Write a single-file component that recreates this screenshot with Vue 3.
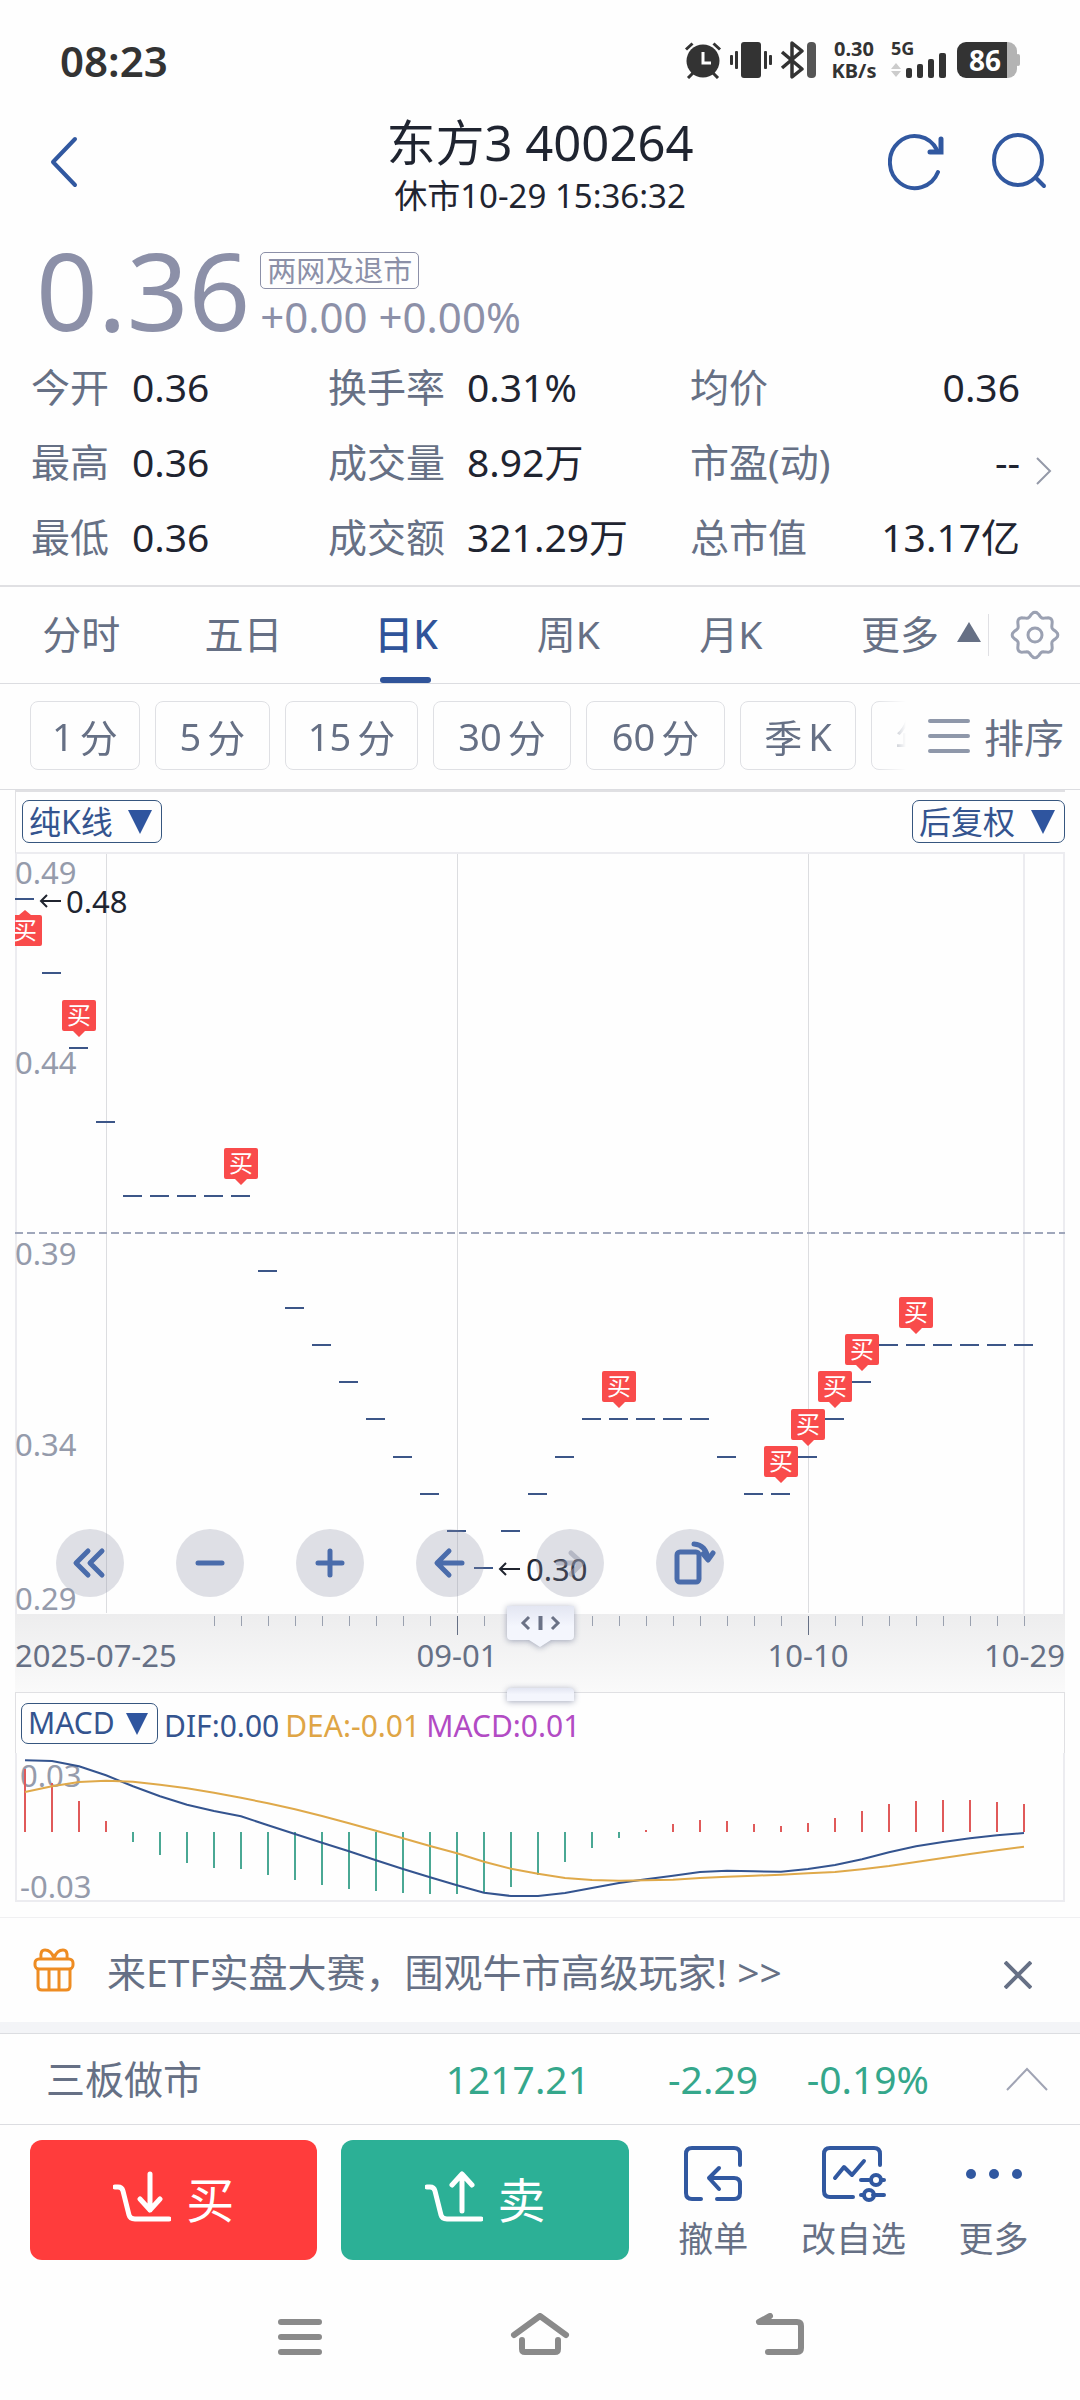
<script setup>
const stats = [
  ['今开', '0.36', '换手率', '0.31%', '均价', '0.36'],
  ['最高', '0.36', '成交量', '8.92万', '市盈(动)', '--'],
  ['最低', '0.36', '成交额', '321.29万', '总市值', '13.17亿'],
]
const tabs = ['分时', '五日', '日K', '周K', '月K']
const periods = [['1', '分'], ['5', '分'], ['15', '分'], ['30', '分'], ['60', '分'], ['季', 'K'], ['年', 'K']]

// Daily closing prices in cents, oldest first
const prices = [
  48, 46, 44, 42, 40, 40, 40, 40, 40, 38, 37, 36, 35, 34, 33, 32, 31, 30, 31, 32,
  33, 34, 34, 34, 34, 34, 33, 32, 32, 33, 34, 35, 36, 36, 36, 36, 36, 36,
]
const px = (i) => 10 + 27 * i
const py = (p) => Math.round(45 + (48 - p) * 37.17)
const candles = prices.map((p, i) => ({ x: px(i), y: py(p) }))
const buys = [2, 8, 22, 28, 29, 30, 31, 33].map((i) => candles[i])
const levels = [
  ['0.49', 30], ['0.44', 220], ['0.39', 411], ['0.34', 602], ['0.29', 756],
]
const ticks = Array.from({ length: 31 }, (_, k) => ({ x: px(k + 7), major: k + 7 === 16 || k + 7 === 29 }))

const hist = [
  63, 49, 31, 11, -10, -23, -31, -36, -37, -43, -48, -53, -57, -59, -61, -62, -62, -61, -55, -43,
  -30, -16, -6, 2, 8, 12, 11, 8, 6, 9, 14, 21, 28, 31, 32, 32, 30, 28,
]
const dif = [
  241, 243, 259, 286, 319, 349, 374, 393, 409, 436, 462, 488, 514, 541, 567, 592, 616, 638, 648, 648,
  639, 624, 609, 598, 587, 576, 572, 574, 575, 567, 555, 538, 517, 499, 486, 475, 466, 459,
]
const dea = [
  336, 319, 306, 302, 305, 314, 325, 338, 353, 370, 388, 408, 430, 452, 475, 498, 520, 545, 566, 581,
  594, 600, 602, 601, 599, 594, 590, 587, 584, 580, 576, 568, 558, 546, 534, 522, 511, 500,
]
const line = (s) => s.map((v, i) => `${px(i)},${(v / 3 - 73).toFixed(1)}`).join(' ')

const gear = Array.from({ length: 96 }, (_, k) => {
  const t = (k / 96) * Math.PI * 2
  const r = 20.6 + 2.2 * Math.cos(8 * t)
  return `${(25 + r * Math.cos(t)).toFixed(1)},${(25 + r * Math.sin(t)).toFixed(1)}`
}).join(' ')
</script>

<template>
  <div class="page">
    <div class="status">
      <span class="clock">08:23</span>
      <svg class="i-alarm" width="38" height="38" viewBox="0 0 38 38" fill="none" stroke="#333" stroke-width="3">
        <circle cx="19" cy="20" r="16.5" fill="#333" stroke="none" />
        <path d="M2 8.500 8.500 2.500M36 8.500 29.500 2.500M9 32l-5 5M29 32l5 5" />
        <path d="M19 11v11h8" stroke="#fff" />
      </svg>
      <svg class="i-vib" width="42" height="38" viewBox="0 0 42 38" fill="#333">
        <rect x="11" y="1" width="20" height="36" rx="3" />
        <rect x="5" y="10" width="3" height="18" rx="1" /><rect x="0" y="14" width="3" height="10" rx="1" />
        <rect x="34" y="10" width="3" height="18" rx="1" /><rect x="39" y="14" width="3" height="10" rx="1" />
      </svg>
      <svg class="i-bt" width="36" height="38" viewBox="0 0 36 38">
        <path d="M2 11l20 17-10 8V2l10 8L2 27" fill="none" stroke="#333" stroke-width="3.500" stroke-linejoin="round" />
        <rect x="27" y="1" width="9" height="36" rx="4" fill="#555" />
      </svg>
      <span class="speed"><b>0.30</b><b>KB/s</b></span>
      <span class="signal">
        <b>5G</b>
        <svg width="56" height="26" viewBox="0 0 56 26">
          <path d="M5 11l5 6H0zM5 25l5-6H0z" fill="#ccc" />
          <g fill="#333">
            <rect x="15" y="16" width="6" height="10" rx="2" /><rect x="26" y="12" width="6" height="14" rx="2" />
            <rect x="37" y="7" width="6" height="19" rx="2" /><rect x="48" y="1" width="7" height="25" rx="2" />
          </g>
        </svg>
      </span>
      <span class="battery"><b>86</b></span>
    </div>

    <header class="head">
      <button class="icon-btn back" aria-label="返回">
        <svg width="28" height="54" viewBox="0 0 28 54" fill="none" stroke="#3158a0" stroke-width="4" stroke-linecap="round" stroke-linejoin="round"><path d="M25 4 3 27l22 23" /></svg>
      </button>
      <div class="title">
        <h1>东方3 400264</h1>
        <p>休市10-29 15:36:32</p>
      </div>
      <div class="tools">
        <button class="icon-btn" aria-label="刷新">
          <svg width="56" height="58" viewBox="0 0 56 58" fill="none" stroke="#3158a0" stroke-width="4" stroke-linecap="round"><path d="M49 17A25 26 0 1 0 50 39" /><path d="M53 6v13H42" stroke-width="5" /></svg>
        </button>
        <button class="icon-btn" aria-label="搜索">
          <svg width="58" height="58" viewBox="0 0 58 58" fill="none" stroke="#3158a0" stroke-width="4" stroke-linecap="round"><ellipse cx="28" cy="27" rx="24" ry="25" /><path d="M46 45l8 8" /></svg>
        </button>
      </div>
    </header>

    <section class="price">
      <strong>0.36</strong>
      <div>
        <span class="tag">两网及退市</span>
        <span class="change">+0.00 +0.00%</span>
      </div>
    </section>

    <section class="stats">
      <dl>
        <template v-for="row in stats" :key="row[0]">
          <dt>{{ row[0] }}</dt><dd>{{ row[1] }}</dd>
          <dt>{{ row[2] }}</dt><dd>{{ row[3] }}</dd>
          <dt>{{ row[4] }}</dt><dd class="end">{{ row[5] }}</dd>
        </template>
      </dl>
      <svg width="18" height="30" viewBox="0 0 18 30" fill="none" stroke="#9499a8" stroke-width="2"><path d="M2 2l13 13L2 28" /></svg>
    </section>

    <nav class="tabs">
      <button v-for="t in tabs" :key="t" :class="{ on: t === '日K' }">{{ t }}</button>
      <button class="more">更多<svg width="24" height="20" viewBox="0 0 24 20"><path d="M12 0l12 20H0z" fill="#667085" /></svg></button>
      <button class="gear" aria-label="设置">
        <svg width="50" height="50" viewBox="0 0 50 50" fill="none" stroke="#9ba1b2" stroke-width="3"><polygon :points="gear" /><circle cx="25" cy="25" r="7" /></svg>
      </button>
    </nav>

    <div class="periods">
      <div class="chips">
        <button v-for="p in periods" :key="p[0]"><span>{{ p[0] }}</span><span>{{ p[1] }}</span></button>
      </div>
      <button class="sort">
        <svg width="42" height="36" viewBox="0 0 42 36" stroke="#8f98aa" stroke-width="4" stroke-linecap="round"><path d="M2 3h38M2 18h38M2 33h38" /></svg>
        排序
      </button>
    </div>

    <main class="panel">
      <div class="panel-head">
        <label class="picker">
          <select aria-label="主图指标"><option>纯K线</option></select>
          <svg width="24" height="24" viewBox="0 0 24 24"><path d="M0 0h24L12 24z" fill="#2f559f" /></svg>
        </label>
        <label class="picker">
          <select aria-label="复权方式"><option>后复权</option></select>
          <svg width="24" height="24" viewBox="0 0 24 24"><path d="M0 0h24L12 24z" fill="#2f559f" /></svg>
        </label>
      </div>

      <div class="chart">
        <svg class="plot" viewBox="0 0 1050 838">
          <defs>
            <linearGradient id="band" x1="0" y1="0" x2="0" y2="1"><stop offset="0" stop-color="#ededee" /><stop offset="1" stop-color="#fafafa" /></linearGradient>
            <linearGradient id="knob" x1="0" y1="0" x2="0" y2="1"><stop offset="0" stop-color="#e3e6f2" /><stop offset=".5" stop-color="#f4f6fd" /></linearGradient>
            <clipPath id="frame"><rect width="1050" height="760" /></clipPath>
          </defs>
          <rect y="760" width="1050" height="78" fill="url(#band)" />
          <path d="M1 0v760M1049 0v760M1009 0v760" stroke="#ececf0" stroke-width="2" />
          <path d="M91.500 0v759M442.500 0v759M793.500 0v759" stroke="#dcdde0" />
          <path d="M0 379h1050" stroke="#a0a7bb" stroke-width="2" stroke-dasharray="8 4" />
          <text v-for="l in levels" :key="l[0]" class="lvl" x="0" :y="l[1]">{{ l[0] }}</text>
          <path v-for="(c, i) in candles" :key="i" :d="`M${Math.max(c.x - 10, 0)} ${c.y}H${c.x + 9}`" stroke="#3c5688" stroke-width="2" />
          <g fill="none" stroke="#20242f" stroke-width="2"><path d="M46 47H26M32 41l-6 6 6 6M505 715h-20M491 709l-6 6 6 6" /></g>
          <text class="ext" x="51" y="59">0.48</text>
          <text class="ext" x="511" y="727">0.30</text>
          <g clip-path="url(#frame)">
            <path d="M0 61h4l6-5 6 5h9q2 0 2 2v27q0 2-2 2H0z" fill="#f94b4b" />
            <text class="buy" x="10" y="85">买</text>
          </g>
          <g v-for="b in buys" :key="b.x">
            <path :d="`M${b.x - 15} ${b.y - 48}h30q2 0 2 2v27q0 2-2 2h-9l-6 6-6-6h-9q-2 0-2-2v-27q0-2 2-2z`" fill="#f94b4b" />
            <text class="buy" :x="b.x" :y="b.y - 24">买</text>
          </g>
          <path v-for="t in ticks" :key="t.x" :d="`M${t.x + 0.5} 762v${t.major ? 19 : 10}`" :stroke="t.major ? '#667085' : '#9aa1af'" />
          <text class="date" x="0" y="813">2025-07-25</text>
          <text class="date" x="442" y="813" text-anchor="middle">09-01</text>
          <text class="date" x="793" y="813" text-anchor="middle">10-10</text>
          <text class="date" x="1050" y="813" text-anchor="end">10-29</text>
          <g class="knob">
            <path d="M492 752h67v30q0 4-4 4h-19l-11 7-11-7h-18q-4 0-4-4z" fill="url(#knob)" />
            <path d="M514 763l-6 6 6 6M537 763l6 6-6 6" fill="none" stroke="#6b7286" stroke-width="3" />
            <path d="M525.500 762v14" stroke="#6b7286" stroke-width="4" />
            <path d="M492 847v-9q0-4 4-4h59q4 0 4 4v9z" fill="url(#knob)" />
          </g>
        </svg>
        <div class="controls">
          <button aria-label="快退"><svg viewBox="0 0 68 68"><path d="M32 22 20 34l12 12M46 22 34 34l12 12" /></svg></button>
          <button aria-label="缩小"><svg viewBox="0 0 68 68"><path d="M22 34h24" /></svg></button>
          <button aria-label="放大"><svg viewBox="0 0 68 68"><path d="M22 34h24M34 22v24" /></svg></button>
          <button aria-label="左移"><svg viewBox="0 0 68 68"><path d="M46 34H22M33 22 21 34l12 12" /></svg></button>
          <button aria-label="右移" disabled><svg viewBox="0 0 68 68"><path d="M22 34h24M35 24l11 10-11 11" /></svg></button>
          <button aria-label="横屏"><svg viewBox="0 0 68 68"><rect x="21" y="23" width="22" height="30" rx="3" /><path d="M38 15q12 1 14 15M47 25l5 6 5-7" /></svg></button>
        </div>
      </div>

      <div class="macd-head">
        <label class="picker small">
          <select aria-label="副图指标"><option>MACD</option></select>
          <svg width="22" height="22" viewBox="0 0 24 24"><path d="M0 0h24L12 24z" fill="#2f559f" /></svg>
        </label>
        <span class="dif">DIF:0.00</span>
        <span class="dea">DEA:-0.01</span>
        <span class="macd">MACD:0.01</span>
      </div>
      <svg class="plot macd-plot" viewBox="0 0 1050 149">
        <path d="M1 0v148H1049V0" fill="none" stroke="#ececf0" stroke-width="2" />
        <text class="lvl" x="5" y="34">0.03</text>
        <text class="lvl" x="5" y="145">-0.03</text>
        <path v-for="(h, i) in hist" :key="i" :d="`M${px(i)} 79v${-h}`" :stroke="h > 0 ? '#e05a5a' : '#4aa894'" stroke-width="2" />
        <polyline :points="line(dif)" fill="none" stroke="#34548f" stroke-width="2" />
        <polyline :points="line(dea)" fill="none" stroke="#dfa94a" stroke-width="2" />
      </svg>
    </main>

    <aside class="banner">
      <svg width="42" height="44" viewBox="0 0 42 44" fill="none" stroke="#ee8c22" stroke-width="3"><rect x="2" y="11" width="38" height="10" rx="4" /><path d="M5 21v17q0 4 4 4h24q4 0 4-4V21M16 21v21M26 21v21M21 10Q18 2 12 2 7 2 8 10M21 10q3-8 9-8 5 0 4 8" /></svg>
      <a href="#">来ETF实盘大赛，围观牛市高级玩家! &gt;&gt;</a>
      <button class="icon-btn close" aria-label="关闭"><svg width="28" height="28" viewBox="0 0 28 28" stroke="#667085" stroke-width="4"><path d="M1 1l26 26M27 1 1 27" /></svg></button>
    </aside>

    <section class="index">
      <span class="name">三板做市</span>
      <span class="i1">1217.21</span>
      <span class="i2">-2.29</span>
      <span class="i3">-0.19%</span>
      <button class="icon-btn" aria-label="展开"><svg width="44" height="24" viewBox="0 0 44 24" fill="none" stroke="#a0a4b4" stroke-width="2"><path d="M2 23 22 2l20 21" /></svg></button>
    </section>

    <footer class="actions">
      <button class="trade buy-btn">
        <svg width="58" height="52" viewBox="0 0 58 52"><path d="M2 16h3q4 0 5 4l6 24q1 4 6 4h34M37 3v36M27 28l10 11 10-11" /></svg>买
      </button>
      <button class="trade sell-btn">
        <svg width="58" height="52" viewBox="0 0 58 52"><path d="M2 16h3q4 0 5 4l6 24q1 4 6 4h34M37 40V4M27 14 37 3l10 11" /></svg>卖
      </button>
      <button class="act">
        <svg width="64" height="60" viewBox="0 0 64 60"><path d="M59 21V10q0-6-6-6H11q-6 0-6 6v39q0 6 6 6h9M28 34h25q6 0 6 6v9q0 6-6 6H36M38 24 28 34l10 11" /></svg>
        撤单
      </button>
      <button class="act wide">
        <svg width="66" height="60" viewBox="0 0 66 60"><path d="M60 21V10q0-6-6-6H10q-6 0-6 6v37q0 6 6 6h23M15 34l9-11 8 8 12-14M41 36h8M62 36h2M41 51h2M53 51h11" /><circle cx="56" cy="36" r="5" /><circle cx="49" cy="51" r="5" /></svg>
        改自选
      </button>
      <button class="act">
        <svg width="60" height="60" viewBox="0 0 60 60"><g fill="#3158a0" stroke="none"><circle cx="7" cy="30" r="5" /><circle cx="30" cy="30" r="5" /><circle cx="53" cy="30" r="5" /></g></svg>
        更多
      </button>
    </footer>

    <nav class="sysnav">
      <button class="icon-btn" aria-label="最近任务"><svg width="60" height="48" viewBox="0 0 60 48"><path d="M11 9h38M11 24h38M11 39h38" /></svg></button>
      <button class="icon-btn" aria-label="主页"><svg width="60" height="48" viewBox="0 0 60 48"><path d="M4 22 30 3l26 19M12 27v9q0 3 3 3h30q3 0 3-3v-9" /></svg></button>
      <button class="icon-btn" aria-label="返回上一级"><svg width="60" height="48" viewBox="0 0 60 48"><path d="M20 3 9 9h38q4 0 4 4v22q0 4-4 4H18" /></svg></button>
    </nav>
  </div>
</template>

<style>
body { background: #fefefe; }
</style>

<style scoped>
.page {
  font-family: "Noto Sans", "Noto Sans CJK SC", sans-serif;
  font-size: 39px;
  color: #667085;
  background: #fefefe;
  overflow: hidden;
}
.page * { box-sizing: border-box; }
button, select { font: inherit; color: inherit; background: none; border: 0; padding: 0; margin: 0; }
svg { display: block; flex: none; }
.icon-btn { display: flex; }

.status { display: flex; align-items: center; height: 112px; padding: 8px 60px 0 60px; color: #333; }
.clock { font-size: 42px; font-weight: 600; margin-right: auto; }
.i-vib { margin-left: 8px; }
.i-bt { margin-left: 8px; }
.speed { display: flex; flex-direction: column; align-items: center; width: 48px; margin: 0 13px 0 14px; font-size: 20px; line-height: 22px; }
.signal { display: flex; flex-direction: column; width: 56px; height: 36px; }
.signal b { font-size: 18px; line-height: 12px; height: 10px; }
.battery {
  position: relative; width: 60px; height: 36px; margin: 0 3px 0 10px; border-radius: 9px;
  background: linear-gradient(90deg, #333 50px, #b3b3b3 50px);
  color: #fff; font-size: 28px; line-height: 36px; padding-left: 12px;
}
.battery::after { content: ""; position: absolute; right: -3px; top: 12px; width: 4px; height: 12px; background: #b3b3b3; border-radius: 2px; }

.head { display: grid; grid-template-columns: 1fr auto 1fr; align-items: start; padding: 2px 32px 0; color: #1f2430; }
.head .icon-btn { height: 96px; align-items: center; }
.head .back { padding-left: 18px; }
.title { text-align: center; }
.title h1 { margin: 0; font-size: 49px; line-height: 56px; font-weight: 400; }
.title p { margin: 0; font-size: 33px; line-height: 52px; }
.tools { display: flex; justify-content: flex-end; gap: 46px; }

.price { display: flex; gap: 10px; padding: 8px 32px 0 36px; height: 128px; color: #8c90a8; }
.price strong { font-size: 108px; line-height: 120px; font-weight: 400; }
.price div { display: flex; flex-direction: column; align-items: flex-start; padding-top: 22px; }
.tag { border: 1px solid; border-radius: 5px; font-size: 29px; line-height: 35px; padding: 0 6px; }
.change { font-size: 42px; line-height: 56px; }

.stats { display: flex; align-items: center; padding: 0 27px 11px 31px; border-bottom: 2px solid #e0e0e3; }
.stats dl { flex: 1; display: grid; grid-template-columns: 101fr 196fr 139fr 223fr 164fr 166fr; margin: 0 15px 0 0; line-height: 74px; row-gap: 1px; white-space: nowrap; }
.stats dd { margin: 0; color: #1f2430; }
.stats .end { text-align: right; }
.stats svg { margin-top: 18px; }

.tabs { display: flex; align-items: center; height: 97px; border-bottom: 1px solid #dcdde1; padding-right: 20px; }
.tabs button { position: relative; flex: 1; height: 96px; padding-bottom: 7px; white-space: nowrap; }
.tabs .on { color: #30549a; font-weight: 500; }
.tabs .on::after { content: ""; position: absolute; left: calc(50% - 26px); bottom: 0; width: 51px; height: 6px; border-radius: 3px; background: #30549a; }
.tabs .more { display: flex; flex: none; align-items: center; justify-content: flex-end; gap: 18px; width: 176px; padding-right: 7px; }
.tabs .gear { display: flex; flex: none; align-items: center; justify-content: flex-end; width: 72px; height: 42px; padding: 0; border-left: 1px solid #e0e0e4; }

.periods { display: flex; align-items: center; padding: 17px 16px 19px 30px; border-bottom: 1px solid #dcdde1; }
.chips {
  flex: 1; min-width: 0; display: grid; overflow: hidden; gap: 15px;
  grid-template-columns: 110px 115px 133px 138px 139px 116px 116px;
  -webkit-mask-image: linear-gradient(90deg, #000 calc(100% - 30px), transparent);
  mask-image: linear-gradient(90deg, #000 calc(100% - 30px), transparent);
}
.chips button { display: flex; justify-content: center; align-items: center; gap: 6px; height: 69px; border: 1px solid #dfe0e4; border-radius: 8px; font-size: 38px; }
.sort { display: flex; align-items: center; gap: 14px; margin-left: 22px; font-size: 40px; white-space: nowrap; }

.panel { margin: 0 15px; }
.panel-head { display: flex; justify-content: space-between; align-items: center; height: 64px; padding: 0 0 2px 6px; border: 1px solid #e0e0e3; border-right-width: 0; border-top-width: 2px; border-bottom: 2px solid #ececf0; }
.picker { position: relative; display: flex; color: #34548f; }
.picker select { appearance: none; height: 43px; border: 1px solid #36567f; border-radius: 7px; padding: 0 48px 0 6px; font-size: 32px; line-height: 41px; }
.picker svg { position: absolute; right: 10px; top: 10px; pointer-events: none; }
.picker.small select { height: 41px; font-size: 30px; line-height: 38px; padding: 0 42px 0 6px; }
.chart { position: relative; z-index: 1; }
.plot { width: 100%; height: auto; overflow: visible; }
.plot text { font-size: 31px; }
.plot .lvl { fill: #959bab; }
.plot .ext { fill: #20242f; }
.plot .date { fill: #667085; }
.plot .buy { font-size: 24px; fill: #fff; text-anchor: middle; }
.knob { filter: drop-shadow(0 1px 3px rgba(60, 70, 110, .45)); }
.controls { position: absolute; left: 41px; bottom: 95px; display: flex; gap: 52px; }
.controls button { width: 68px; height: 68px; border-radius: 50%; background: rgba(137, 139, 163, .27); }
.controls svg { fill: none; stroke: #4a6cab; stroke-width: 5; stroke-linecap: round; stroke-linejoin: round; }
.controls button:disabled svg { stroke: rgba(140, 146, 165, .5); }
.macd-head { display: flex; align-items: center; gap: 6px; height: 61px; padding-left: 5px; border: 1px solid #e0e0e3; border-bottom: 0; font-size: 30px; line-height: 40px; }
.macd-head > span { padding-top: 6px; }
.dif { color: #34548f; }
.dea { color: #dfa545; }
.macd { color: #b24bc4; }

.banner { display: flex; align-items: center; height: 116px; margin-top: 15px; padding: 0 48px 0 33px; border-top: 1px solid #f0f0f2; border-bottom: 11px solid #f3f4f7; }
.banner a { flex: 1; margin-left: 32px; color: inherit; text-decoration: none; white-space: nowrap; }
.banner .close { padding-top: 10px; }

.index { display: flex; align-items: center; height: 92px; padding: 0 31px 0 46px; border-top: 1px solid #dcdde1; border-bottom: 1px solid #dcdde1; color: #35a78b; line-height: 90px; text-align: right; }
.index .name { color: #667085; margin-right: auto; }
.i2 { width: 168px; }
.i3 { width: 171px; margin-right: 76px; }

.actions { display: flex; align-items: flex-start; height: 150px; padding: 15px 38px 0 30px; }
.trade { flex: none; width: 28.4%; display: flex; align-items: center; justify-content: center; gap: 15px; height: 120px; padding-bottom: 6px; border-radius: 12px; color: #fff; font-size: 48px; }
.trade svg { fill: none; stroke: #fff; stroke-width: 5; stroke-linecap: round; stroke-linejoin: round; }
.buy-btn { background: #ff3c3c; margin-right: 24px; }
.sell-btn { background: #2cb096; margin-right: 36px; }
.act { flex: 98; display: flex; flex-direction: column; align-items: center; font-size: 35px; line-height: 50px; margin-top: 4px; gap: 10px; white-space: nowrap; }
.act.wide { flex: 186; }
.act svg { fill: none; stroke: #3158a0; stroke-width: 4; stroke-linecap: round; stroke-linejoin: round; }

.sysnav { display: flex; justify-content: center; align-items: center; gap: 180px; height: 124px; }
.sysnav svg { fill: none; stroke: #8a8a8a; stroke-width: 6; stroke-linecap: round; stroke-linejoin: round; }
</style>
